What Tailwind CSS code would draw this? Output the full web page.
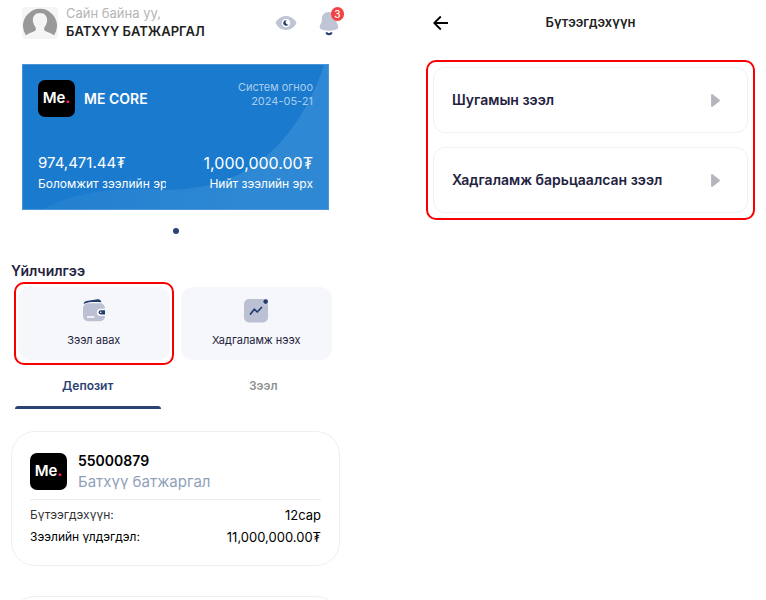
<!DOCTYPE html>
<html lang="mn">
<head>
<meta charset="utf-8">
<meta name="viewport" content="width=device-width, initial-scale=1">
<title>ME CORE</title>
<script src="https://cdn.jsdelivr.net/npm/@tailwindcss/browser@4"></script>
</head>
<body class="bg-white font-['Inter','Noto_Sans',sans-serif] text-[#1f2340]">
<main class="grid h-screen grid-cols-2 gap-[86px] overflow-hidden px-[11px]">

  <section class="min-w-0">
    <header class="flex h-16 items-start px-[11px] pt-[5px]">
      <svg class="mt-[2px] h-8 w-9 shrink-0" viewBox="0 0 36 32" aria-hidden="true">
        <rect width="36" height="32" rx="3" fill="#f5f5f5"/>
        <path d="M4 28.500A17 17 0 1 1 32 28.500C30 26 26 25.500 23.200 24C21.500 23 21.800 21 23.300 19C26.500 14.500 26 6 18 6C10 6 9.500 14.500 12.700 19C14.200 21 14.500 23 12.800 24C10 25.500 6 26 4 28.500Z" fill="#999"/>
      </svg>
      <div class="ml-2 min-w-0 flex-1 whitespace-nowrap">
        <p class="text-[13px] leading-[17px] text-[#b5b5b5]">Сайн байна уу,</p>
        <h1 class="text-[13px] leading-[18px] font-semibold text-[#222]">БАТХҮҮ БАТЖАРГАЛ</h1>
      </div>
      <button type="button" aria-label="Үлдэгдэл харах" class="mt-[7px]">
        <svg class="h-[22px] w-[22px]" viewBox="0 0 22 22" aria-hidden="true">
          <path d="M.5 11C5 1.800 17 1.800 21.500 11C17 20.200 5 20.200 .5 11Z" fill="#bfc5d5"/>
          <circle cx="11" cy="11" r="4.200" fill="#fff"/>
          <path d="M11.800 8.400A2.700 2.700 0 1 0 13.400 12.200A1.700 1.700 0 1 1 11.800 8.400Z" fill="#233b6e"/>
        </svg>
      </button>
      <button type="button" aria-label="Мэдэгдэл" class="relative mt-[7px] -mr-[14px] ml-[22px] w-6">
        <svg class="h-6 w-5" viewBox="0 0 20 24" aria-hidden="true">
          <path d="M10 0C5 0 2.800 3.500 2.800 7C2.800 10 2.600 10.500 1.500 12.200C-.2 15 .8 17 3.500 17.800C7.500 19 12.500 19 16.500 17.800C19.200 17 20.200 15 18.500 12.200C17.400 10.500 17.200 10 17.200 7C17.200 3.500 15 0 10 0Z" fill="#bfc5d5"/>
          <path d="M7.200 20.500C8.300 22.700 11.700 22.700 12.800 20.500" fill="none" stroke="#233b6e" stroke-width="2"/>
        </svg>
        <span class="absolute -top-[5px] left-3 flex h-[14px] w-[13px] items-center justify-center rounded-full bg-[#f44141] text-[10px] leading-none font-medium text-white">3</span>
      </button>
    </header>

    <article class="relative mx-[11px] h-[146px] overflow-hidden border border-[#4a96d8] bg-[#1a7ace] text-white">
      <svg class="absolute inset-0 h-full w-full" viewBox="0 0 307 146" preserveAspectRatio="none" aria-hidden="true">
        <defs><linearGradient id="swoosh"><stop offset="0" stop-color="#2280d0"/><stop offset=".7" stop-color="#2e88d3"/></linearGradient></defs>
        <path d="M303 0C288 48 256 93 215 112C187 125 158 128 130 126C88 124 50 130 20 146H307V0Z" fill="url(#swoosh)"/>
      </svg>
      <div class="relative flex h-full flex-col justify-between p-[15px]">
        <div class="flex items-start justify-between">
          <div class="flex items-center gap-[9px]">
            <div class="flex h-[37px] w-[37px] items-center justify-center rounded-[7px] bg-black text-[15px] font-semibold"><span>Me<span class="font-bold text-[#ff1f70]">.</span></span></div>
            <h2 class="text-sm font-semibold">ME CORE</h2>
          </div>
          <p class="text-right text-[11px] leading-[14px] text-[#a9cdef]">Систем огноо<br>2024-05-21</p>
        </div>
        <dl class="flex justify-between">
          <div class="flex w-32 flex-col-reverse overflow-hidden whitespace-nowrap">
            <dt class="text-xs leading-5">Боломжит зээлийн эрх</dt>
            <dd class="text-[15px] leading-[22px]">974,471.44₮</dd>
          </div>
          <div class="flex flex-col-reverse text-right whitespace-nowrap">
            <dt class="text-xs leading-5">Нийт зээлийн эрх</dt>
            <dd class="text-base leading-[22px]">1,000,000.00₮</dd>
          </div>
        </dl>
      </div>
    </article>
    <div class="mx-auto mt-[18px] h-[6px] w-[6px] rounded-full bg-[#2b4373]"></div>

    <h2 class="mt-[27px] text-sm leading-5 font-semibold">Үйлчилгээ</h2>
    <div class="mt-[6px] grid grid-cols-2 gap-[11px] pr-2 pl-[7px]">
      <button type="button" class="relative flex h-[73px] flex-col items-center rounded-xl bg-[#f5f7fb] pt-3 text-[11px]">
        <span class="absolute -inset-x-1 -inset-y-[5px] rounded-[10px] border-2 border-[#f80000]"></span>
        <svg class="h-6 w-6" viewBox="0 0 24 24" aria-hidden="true">
          <path d="M1.500 5C1.800 2.800 3.500 2.100 6 1.800L15.500 .2C18 -.1 19 1.500 19.400 3.200C14 3.100 6 2.600 1.500 5Z" fill="#233b6e"/>
          <rect x="1" y="4.200" width="22" height="18" rx="5" fill="#bbc1d3"/>
          <path d="M5 18H12.500" stroke="#fff" stroke-width="1.500"/>
          <path d="M23 9.700H18.500A3.600 3.600 0 0 0 18.500 16.900H23Z" fill="#fff"/>
          <path d="M23 11.200H18.700A2 2 0 0 0 18.700 15.400H23Z" fill="#233b6e"/>
          <circle cx="18.800" cy="13.300" r=".8" fill="#fff"/>
        </svg>
        <span class="mt-2 leading-[18px]">Зээл авах</span>
      </button>
      <button type="button" class="flex h-[73px] flex-col items-center rounded-xl bg-[#f5f7fb] pt-3 text-[11px]">
        <svg class="h-6 w-6" viewBox="0 0 24 24" aria-hidden="true">
          <rect x="0" y="0" width="24" height="23.500" rx="5" fill="#bbc1d3"/>
          <path d="M6.500 15L10.300 10.200L13.200 13L17.500 8.500" fill="none" stroke="#233b6e" stroke-width="1.700" stroke-linecap="round" stroke-linejoin="round"/>
          <circle cx="21.600" cy="2.600" r="2.900" fill="#d5d9e5"/>
          <circle cx="21.600" cy="2.600" r="2.300" fill="#233b6e"/>
        </svg>
        <span class="mt-2 leading-[18px]">Хадгаламж нээх</span>
      </button>
    </div>

    <div role="tablist" class="-mx-[11px] mt-3 grid grid-cols-2 text-xs font-semibold">
      <button type="button" role="tab" aria-selected="true" class="flex flex-col items-center px-[15px] text-[#2b4373]">
        <span class="leading-7">Депозит</span>
        <span class="mt-[6px] h-[3px] w-full rounded-t-full bg-[#2b4373]"></span>
      </button>
      <button type="button" role="tab" aria-selected="false" class="flex flex-col items-center text-[#919191]">
        <span class="leading-7">Зээл</span>
      </button>
    </div>

    <article class="mt-[22px] h-[135px] rounded-[24px] border border-[#efefef] px-[18px] pt-[18px] text-black">
      <div class="flex items-center gap-[11px] border-b border-[#ececec] pb-[7px]">
        <div class="flex h-[37px] w-[37px] items-center justify-center rounded-[7px] bg-black text-[15px] font-semibold text-white"><span>Me<span class="font-bold text-[#ff1f70]">.</span></span></div>
        <div>
          <h3 class="text-sm leading-[21px] font-semibold">55000879</h3>
          <p class="text-[15px] leading-[21px] text-[#919fb9]">Батхүү батжаргал</p>
        </div>
      </div>
      <dl class="mt-1 text-xs leading-[22px]">
        <div class="flex justify-between"><dt class="text-[#333]">Бүтээгдэхүүн:</dt><dd class="text-[13px]">12сар</dd></div>
        <div class="flex justify-between"><dt>Зээлийн үлдэгдэл:</dt><dd class="text-[13px]">11,000,000.00₮</dd></div>
      </dl>
    </article>
    <article class="mt-[30px] h-[135px] rounded-[24px] border border-[#efefef]"></article>
  </section>

  <section class="min-w-0">
    <header class="relative flex h-[46px] items-center justify-center">
      <button type="button" aria-label="Буцах" class="absolute left-[7px]">
        <svg class="h-4 w-4" viewBox="0 0 16 16" fill="none" stroke="#000" stroke-width="1.800" aria-hidden="true"><path d="M7.800 1.500L1.200 8L7.800 14.500M1.200 8H15"/></svg>
      </button>
      <h2 class="text-[13px] font-semibold text-[#222]">Бүтээгдэхүүн</h2>
    </header>
    <div class="mt-[14px] flex flex-col gap-[14px] rounded-[10px] border-2 border-[#f80000] p-[5px]">
      <button type="button" class="flex h-[66px] items-center justify-between rounded-xl border border-[#f1f1f3] pr-[27px] pl-[18px] text-sm font-semibold">
        <span>Шугамын зээл</span>
        <svg class="h-[13px] w-[9px]" viewBox="0 0 9 13" aria-hidden="true"><path d="M1 1V12L8 6.500Z" fill="#b4b5bd" stroke="#b4b5bd" stroke-width="1.800" stroke-linejoin="round"/></svg>
      </button>
      <button type="button" class="flex h-[66px] items-center justify-between rounded-xl border border-[#f1f1f3] pr-[27px] pl-[18px] text-sm font-semibold">
        <span>Хадгаламж барьцаалсан зээл</span>
        <svg class="h-[13px] w-[9px]" viewBox="0 0 9 13" aria-hidden="true"><path d="M1 1V12L8 6.500Z" fill="#b4b5bd" stroke="#b4b5bd" stroke-width="1.800" stroke-linejoin="round"/></svg>
      </button>
    </div>
  </section>
</main>
</body>
</html>
